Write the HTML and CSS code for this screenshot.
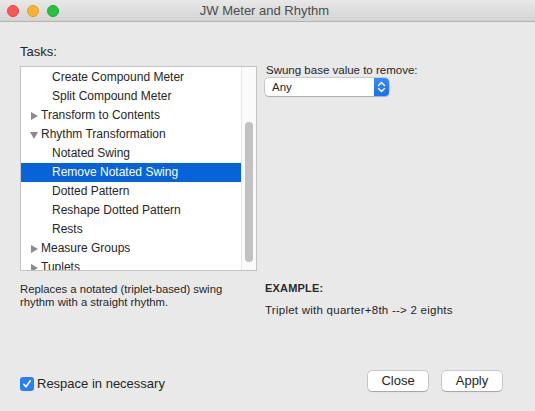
FILE: index.html
```html
<!DOCTYPE html>
<html>
<head>
<meta charset="utf-8">
<link rel="stylesheet" href="styles.css">
</head>
<body>
<div class="window">
  <div class="titlebar">
    <div class="lights">
      <span class="light red"></span>
      <span class="light yellow"></span>
      <span class="light green"></span>
    </div>
    <div class="title">JW Meter and Rhythm</div>
  </div>
  <div class="content">
    <div class="left-top">
      <div class="tasks-label">Tasks:</div>
      <div class="list">
        <div class="rows">
          <div class="row child">Create Compound Meter</div>
          <div class="row child">Split Compound Meter</div>
          <div class="row parent"><span class="tri right"></span>Transform to Contents</div>
          <div class="row parent"><span class="tri down"></span>Rhythm Transformation</div>
          <div class="row child">Notated Swing</div>
          <div class="row child selected">Remove Notated Swing</div>
          <div class="row child">Dotted Pattern</div>
          <div class="row child">Reshape Dotted Pattern</div>
          <div class="row child">Rests</div>
          <div class="row parent"><span class="tri right"></span>Measure Groups</div>
          <div class="row parent"><span class="tri right"></span>Tuplets</div>
        </div>
        <div class="scrolltrack"><div class="thumb"></div></div>
      </div>
    </div>
    <div class="right-top">
      <div class="small-label">Swung base value to remove:</div>
      <div class="popup">
        <span class="popup-value">Any</span>
        <span class="popup-arrows">
          <svg width="9" height="12" viewBox="0 0 9 12"><path d="M1.5 4.5 L4.5 1.5 L7.5 4.5 M1.5 7.5 L4.5 10.5 L7.5 7.5" fill="none" stroke="#fff" stroke-width="1.4" stroke-linecap="round" stroke-linejoin="round"/></svg>
        </span>
      </div>
    </div>
    <div class="description">Replaces a notated (triplet-based) swing<br>rhythm with a straight rhythm.</div>
    <div class="example">
      <div class="example-head">EXAMPLE:</div>
      <div class="example-text">Triplet with quarter+8th --&gt; 2 eights</div>
    </div>
  </div>
  <div class="footer">
    <label class="check">
      <span class="box"><svg width="10" height="10" viewBox="0 0 10 10"><path d="M1.8 5.4 L4 7.8 L8.3 1.8" fill="none" stroke="#fff" stroke-width="1.6" stroke-linecap="round" stroke-linejoin="round"/></svg></span>
      <span class="check-text">Respace in necessary</span>
    </label>
    <div class="buttons">
      <button class="btn">Close</button>
      <button class="btn">Apply</button>
    </div>
  </div>
</div>
</body>
</html>
```
FILE: styles.css
```css
* { box-sizing: border-box; }
html, body {
  margin: 0;
  padding: 0;
  background: #e9e9e9;
}
body {
  font-family: "Liberation Sans", Arial, sans-serif;
  color: #262626;
}
.window {
  width: 535px;
  height: 411px;
  display: flex;
  flex-direction: column;
  background: #e9e9e9;
  border-radius: 5px 5px 0 0;
  overflow: hidden;
}
.titlebar {
  height: 22px;
  flex: none;
  position: relative;
  background: linear-gradient(#e8e8e8, #d4d4d4);
  border-bottom: 1px solid #b1b1b1;
  display: flex;
  align-items: center;
  justify-content: center;
}
.lights {
  position: absolute;
  left: 7px;
  top: 5px;
  display: flex;
  gap: 8px;
}
.light {
  width: 12px;
  height: 12px;
  border-radius: 50%;
  display: block;
}
.red { background: #fd5753; border: 0.5px solid #e0443e; }
.yellow { background: #fdb42d; border: 0.5px solid #de9b22; }
.green { background: #26c33f; border: 0.5px solid #1aab2d; }
.title {
  font-size: 13px;
  color: #4b4b4b;
  line-height: 16px;
  margin-top: 1px;
  margin-right: 6px;
}
.content {
  display: grid;
  grid-template-columns: 237px 1fr;
  column-gap: 8px;
  padding: 22px 0 0 20px;
}
.tasks-label {
  font-size: 13px;
  line-height: 16px;
  color: #222;
}
.list {
  margin-top: 6px;
  height: 205px;
  background: #fff;
  border: 1px solid #c3c3c3;
  display: flex;
  overflow: hidden;
}
.rows {
  flex: 1;
  padding-top: 1px;
}
.row {
  height: 19px;
  line-height: 19px;
  font-size: 12px;
  white-space: nowrap;
  color: #262626;
  display: flex;
  align-items: center;
}
.row.child { padding-left: 31px; }
.row.parent { padding-left: 9px; }
.row.selected {
  background: #0863d9;
  color: #fff;
}
.tri {
  display: inline-block;
  width: 11px;
  height: 10px;
  position: relative;
}
.tri.right::before {
  content: "";
  position: absolute;
  left: 1px;
  top: 1px;
  border-left: 7px solid #8b8b8b;
  border-top: 4.5px solid transparent;
  border-bottom: 4.5px solid transparent;
}
.tri.down::before {
  content: "";
  position: absolute;
  left: 0;
  top: 2px;
  border-top: 7px solid #8b8b8b;
  border-left: 4.5px solid transparent;
  border-right: 4.5px solid transparent;
}
.scrolltrack {
  width: 15px;
  flex: none;
  background: #fafafa;
  border-left: 1px solid #e6e6e6;
  padding: 55px 0 0 3px;
}
.thumb {
  width: 8px;
  height: 140px;
  border-radius: 4px;
  background: #c2c2c2;
}
.right-top {
  padding-top: 19px;
}
.small-label {
  font-size: 11.5px;
  line-height: 14px;
  color: #262626;
  padding-left: 1px;
}
.popup {
  margin-top: 1px;
  width: 124px;
  height: 18px;
  background: #fff;
  border-radius: 4px;
  box-shadow: 0 0 0 0.5px rgba(0,0,0,0.25), 0 1px 1px rgba(0,0,0,0.15);
  display: flex;
  overflow: hidden;
}
.popup-value {
  flex: 1;
  font-size: 11.5px;
  line-height: 18px;
  padding-left: 7px;
  color: #262626;
}
.popup-arrows {
  width: 15px;
  background: linear-gradient(#3a8cf8, #1670ef);
  display: flex;
  align-items: center;
  justify-content: center;
}
.description {
  margin-top: 12px;
  font-size: 11.3px;
  line-height: 13px;
  color: #262626;
}
.example {
  margin-top: 10px;
}
.example-head {
  font-size: 11px;
  font-weight: bold;
  line-height: 14px;
  color: #2a2a2a;
  letter-spacing: 0.2px;
}
.example-text {
  margin-top: 8px;
  font-size: 11.5px;
  line-height: 14px;
  color: #262626;
  letter-spacing: 0.25px;
}
.footer {
  margin-top: auto;
  display: flex;
  align-items: flex-end;
  justify-content: space-between;
  padding: 0 33px 20px 20px;
}
.check {
  display: flex;
  align-items: center;
  gap: 3px;
  height: 14px;
}
.box {
  width: 14px;
  height: 14px;
  border-radius: 3px;
  background: #2a7ef6;
  display: flex;
  align-items: center;
  justify-content: center;
}
.check-text {
  font-size: 13px;
  line-height: 14px;
  color: #262626;
}
.buttons {
  display: flex;
  gap: 14px;
}
.btn {
  width: 60px;
  height: 20px;
  padding: 0;
  margin: 0;
  font-family: "Liberation Sans", Arial, sans-serif;
  font-size: 13px;
  line-height: 18px;
  color: #262626;
  background: #fff;
  border: none;
  border-radius: 4px;
  box-shadow: 0 0 0 0.5px rgba(0,0,0,0.28), 0 1px 1px rgba(0,0,0,0.18);
}
```
